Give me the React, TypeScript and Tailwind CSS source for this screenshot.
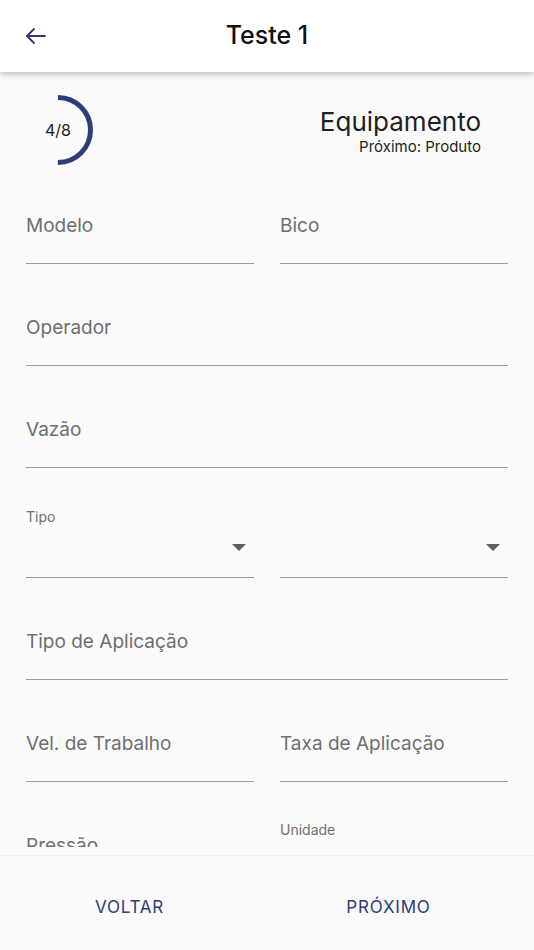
import React from 'react';

const FONT = { fontFamily: 'Inter, "Noto Sans", "Liberation Sans", sans-serif' };

// Plain underlined text field, label sits where the value would be
const TextField = ({ label }: { label: string }) => (
  <div className="h-[62px] border-b border-[#9e9e9e] pt-3">
    <span className="block text-[19px] leading-6 text-[#6f6f6f]">{label}</span>
  </div>
);

// Dropdown with optional small label on top
const SelectField = ({ label }: { label?: string }) => (
  <div className="flex h-[70px] flex-col border-b border-[#9e9e9e]">
    <span className="h-[18px] text-[14px] leading-[18px] text-[#6f6f6f]">{label ?? ''}</span>
    <div className="flex flex-1 items-center justify-end pb-2 pr-2">
      <svg width="14" height="8" viewBox="0 0 14 8">
        <path d="M0 0 L14 0 L7 7 Z" fill="#5f5f5f" />
      </svg>
    </div>
  </div>
);

const Progress = ({ step, total }: { step: number; total: number }) => {
  const r = 32.5;
  const c = 2 * Math.PI * r;
  const frac = step / total;
  return (
    <div className="relative h-[70px] w-[70px]">
      <svg width="70" height="70" viewBox="0 0 70 70" className="absolute inset-0">
        <circle
          cx="35"
          cy="35"
          r={r}
          fill="none"
          stroke="#2d3d79"
          strokeWidth="5"
          strokeDasharray={`${c * frac} ${c}`}
          transform="rotate(-90 35 35)"
        />
      </svg>
      <div className="absolute inset-0 flex items-center justify-center text-[16px] text-[#222]">
        {step}/{total}
      </div>
    </div>
  );
};

export default function App() {
  return (
    <div className="flex h-[950px] w-[534px] flex-col overflow-hidden bg-[#fafafa]" style={FONT}>
      {/* Header */}
      <header className="relative z-10 flex h-[72px] shrink-0 items-center bg-white shadow-[0_2px_6px_rgba(0,0,0,0.25)]">
        <button type="button" className="ml-[24px] flex h-6 w-6 items-center justify-center text-[#2d3d79]">
          <svg width="24" height="24" viewBox="0 0 24 24" fill="none" stroke="currentColor" strokeWidth="1.8" strokeLinecap="round" strokeLinejoin="round">
            <path d="M21 12H3" />
            <path d="M10 5l-7 7 7 7" />
          </svg>
        </button>
        <h1 className="pointer-events-none absolute left-0 right-0 text-center text-[25px] font-medium text-[#111]">
          Teste 1
        </h1>
      </header>

      {/* Form */}
      <main className="h-[775px] shrink-0 overflow-hidden px-[26px]">
        <div className="mt-[23px] flex items-start justify-between">
          <div className="-ml-[3px]">
            <Progress step={4} total={8} />
          </div>
          <div className="mr-[27px] mt-[12px] flex flex-col items-end">
            <span className="text-[26px] leading-[30px] text-[#1f1f1f]">Equipamento</span>
            <span className="mt-px text-[15px] leading-[18px] text-[#1f1f1f]">Próximo: Produto</span>
          </div>
        </div>

        <div className="mt-[37px] flex flex-col gap-10">
          <div className="grid grid-cols-2 gap-x-[26px]">
            <TextField label="Modelo" />
            <TextField label="Bico" />
          </div>
          <TextField label="Operador" />
          <TextField label="Vazão" />
          <div className="grid grid-cols-2 gap-x-[26px]">
            <SelectField label="Tipo" />
            <SelectField />
          </div>
          <TextField label="Tipo de Aplicação" />
          <div className="grid grid-cols-2 gap-x-[26px]">
            <TextField label="Vel. de Trabalho" />
            <TextField label="Taxa de Aplicação" />
          </div>
          <div className="grid grid-cols-2 gap-x-[26px]">
            <TextField label="Pressão" />
            <div className="-mt-px">
              <SelectField label="Unidade" />
            </div>
          </div>
        </div>
      </main>

      {/* Footer actions */}
      <div className="h-[8px] shrink-0" />
      <footer className="flex flex-1 items-center border-t border-[#ececec] bg-[#fafafa] pt-[10px]">
        <button type="button" className="flex-1 text-center text-[17px] tracking-[0.8px] text-[#2d3d79]">
          VOLTAR
        </button>
        <button type="button" className="flex-1 pr-[16px] text-center text-[17px] tracking-[0.8px] text-[#2d3d79]">
          PRÓXIMO
        </button>
      </footer>
    </div>
  );
}
